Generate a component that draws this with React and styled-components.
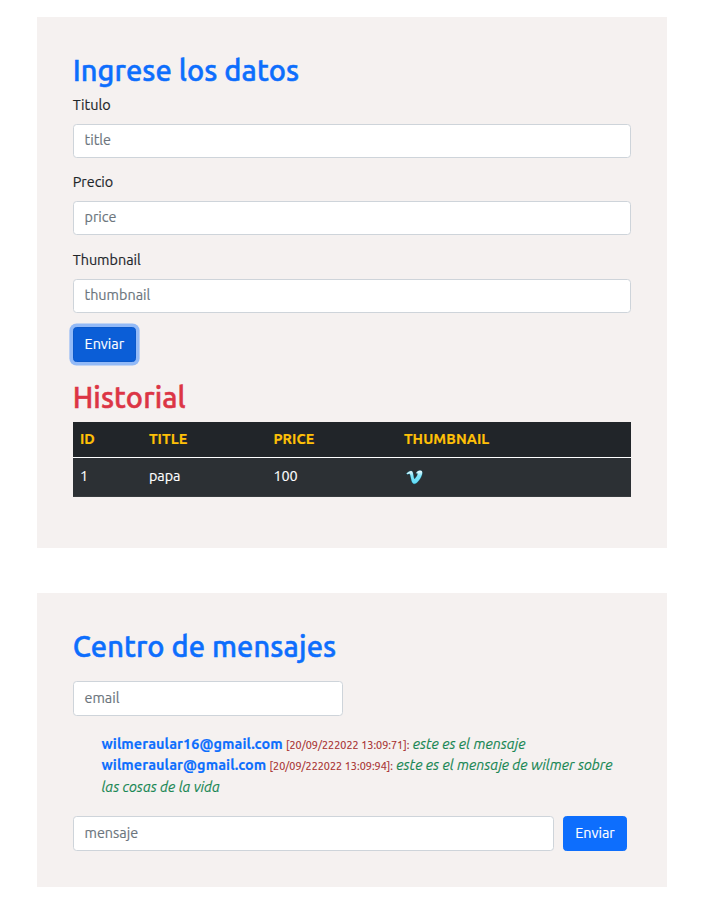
import React from 'react';
import styled, { createGlobalStyle } from 'styled-components';

const GlobalStyle = createGlobalStyle`
  *, *::before, *::after { box-sizing: border-box; }
  body {
    margin: 0;
    background: #fff;
    color: #212529;
    font: 400 14.4px/21.6px Ubuntu, "Noto Sans", "Open Sans", sans-serif;
    -webkit-text-stroke: 0.15px currentColor;
  }
`;

const Page = styled.main`
  display: flex;
  flex-direction: column;
  gap: 45px;
  width: 630px;
  margin: 17px 0 0 37px;
`;

const Card = styled.section`
  height: ${({ $height }) => $height}px;
  padding: 36px 36px 36px 35.7px;
  background: #f5f1f0;
`;

const Heading = styled.h2`
  margin: 0 0 ${({ $gap }) => $gap || 7.2}px;
  font-size: 29px;
  font-weight: 500;
  line-height: 34.56px;
  letter-spacing: 0.1px;
  -webkit-text-stroke: 0.5px currentColor;
  color: ${({ $danger }) => ($danger ? '#dc3545' : '#0d6efd')};
`;

const Field = styled.div`
  margin-bottom: 14.4px;
`;

const Label = styled.label`
  display: block;
  margin-bottom: 7.2px;
`;

const Input = styled.input`
  display: block;
  width: ${({ $width }) => $width || '100%'};
  height: ${({ $tall }) => ($tall ? 35 : 34.4)}px;
  padding: ${({ $tall }) => ($tall ? '5px 10.8px 6.4px' : '4.4px 10.8px 6.4px')};
  border: 1px solid #ced4da;
  border-radius: 3.6px;
  background: #fff;
  color: #212529;
  font: inherit;
  outline: none;

  &::placeholder {
    color: #6c757d;
    opacity: 1;
  }
`;

const Button = styled.button`
  display: block;
  width: ${({ $pressed }) => ($pressed ? 63.4 : 64)}px;
  height: 35px;
  padding: ${({ $pressed }) => ($pressed ? '0' : '1px 0 0')};
  border: 1px solid ${({ $pressed }) => ($pressed ? '#0a58ca' : '#0d6efd')};
  border-radius: 3.6px;
  background: ${({ $pressed }) => ($pressed ? '#0b5ed7' : '#0d6efd')};
  box-shadow: ${({ $pressed }) => ($pressed ? '0 0 0 3.6px rgba(49, 132, 253, 0.5)' : 'none')};
  color: #fff;
  font: inherit;
`;

const History = styled.div`
  margin-top: 18px;
`;

const Table = styled.table`
  width: 558.3px;
  table-layout: fixed;
  border-collapse: separate;
  border-spacing: 0;
  color: #fff;
`;

const Column = styled.col`
  width: ${({ $width }) => $width}px;
`;

const HeaderCell = styled.th`
  height: 36px;
  padding: 0 7.2px;
  border-bottom: 1px solid #fff;
  background: #212529;
  color: #ffc107;
  text-align: left;
  font-weight: 700;
  letter-spacing: 0.1px;
`;

const Cell = styled.td`
  height: 39px;
  padding: 0 7.2px;
  border-bottom: 1px solid #373b3e;
  background: #2c3034;
`;

const Thumbnail = styled.svg`
  display: block;
  width: 24px;
  height: 24px;
  margin-left: -0.6px;
`;

const Messages = styled.div`
  margin: 17.4px 0 17.6px;
  padding: 0 14px 0 28.8px;
`;

const Author = styled.b`
  color: #0d6efd;
  letter-spacing: 0.09px;
`;

const Timestamp = styled.span`
  color: #a52a2a;
  font-size: 10.8px;
  line-height: 1;
  letter-spacing: 0.03px;
`;

const MessageText = styled.i`
  color: #198754;
`;

const Composer = styled.form`
  display: flex;
  gap: 9px;
`;

const fields = [
  ['Titulo', 'title'],
  ['Precio', 'price'],
  ['Thumbnail', 'thumbnail'],
];

const messages = [
  ['wilmeraular16@gmail.com', '20/09/222022 13:09:71', 'este es el mensaje'],
  ['wilmeraular@gmail.com', '20/09/222022 13:09:94', 'este es el mensaje de wilmer sobre las cosas de la vida'],
];

function VimeoIcon() {
  return (
    <Thumbnail viewBox="0 0 24 24" aria-label="Vimeo">
      <defs>
        <linearGradient id="vimeo" x1="0" y1="0" x2="0" y2="1">
          <stop offset="0" stopColor="#f4fcff" />
          <stop offset="0.4" stopColor="#80e5fa" />
          <stop offset="1" stopColor="#5edcf8" />
        </linearGradient>
      </defs>
      <path
        d="M3.5 8.4C5 7 6.5 5.9 8 5.9c1.6 0 1.9 1.8 2.2 3.5.4 2.3.7 4.5 1.3 4.5.8 0 3.4-3.8 3.2-5.1-.1-.7-.9-.7-1.7-.4.8-1.9 2.3-2.8 4-2.8 2 0 2.5 1.2 2.2 3-.6 3.8-4.9 10.2-7.8 10.2-1.9 0-2.6-1.7-3.2-4.7-.5-2-.9-4.8-1.6-5.3-.5-.2-1.3.2-2.4.5z"
        fill="url(#vimeo)"
        stroke="#175e70"
        strokeWidth="1"
        paintOrder="stroke"
      />
    </Thumbnail>
  );
}

export default function App() {
  return (
    <>
      <GlobalStyle />
      <Page>
        <Card $height={531}>
          <Heading>Ingrese los datos</Heading>
          {fields.map(([label, name]) => (
            <Field key={name}>
              <Label htmlFor={name}>{label}</Label>
              <Input id={name} placeholder={name} />
            </Field>
          ))}
          <Button $pressed>Enviar</Button>
          <History>
            <Heading $danger>Historial</Heading>
            <Table>
              <colgroup>
                <Column $width={69} />
                <Column $width={124.5} />
                <Column $width={130.5} />
                <Column $width={234.3} />
              </colgroup>
              <thead>
                <tr>
                  {['ID', 'TITLE', 'PRICE', 'THUMBNAIL'].map((title) => (
                    <HeaderCell key={title}>{title}</HeaderCell>
                  ))}
                </tr>
              </thead>
              <tbody>
                <tr>
                  <Cell>1</Cell>
                  <Cell>papa</Cell>
                  <Cell>100</Cell>
                  <Cell><VimeoIcon /></Cell>
                </tr>
              </tbody>
            </Table>
          </History>
        </Card>
        <Card $height={294}>
          <Heading $gap={17.6}>Centro de mensajes</Heading>
          <Input placeholder="email" $width="270px" $tall />
          <Messages>
            {messages.map(([author, time, text]) => (
              <div key={author}>
                <Author>{author}</Author> <Timestamp>[{time}]:</Timestamp> <MessageText>{text}</MessageText>
              </div>
            ))}
          </Messages>
          <Composer>
            <Input placeholder="mensaje" $width="481.3px" $tall />
            <Button type="button">Enviar</Button>
          </Composer>
        </Card>
      </Page>
    </>
  );
}
